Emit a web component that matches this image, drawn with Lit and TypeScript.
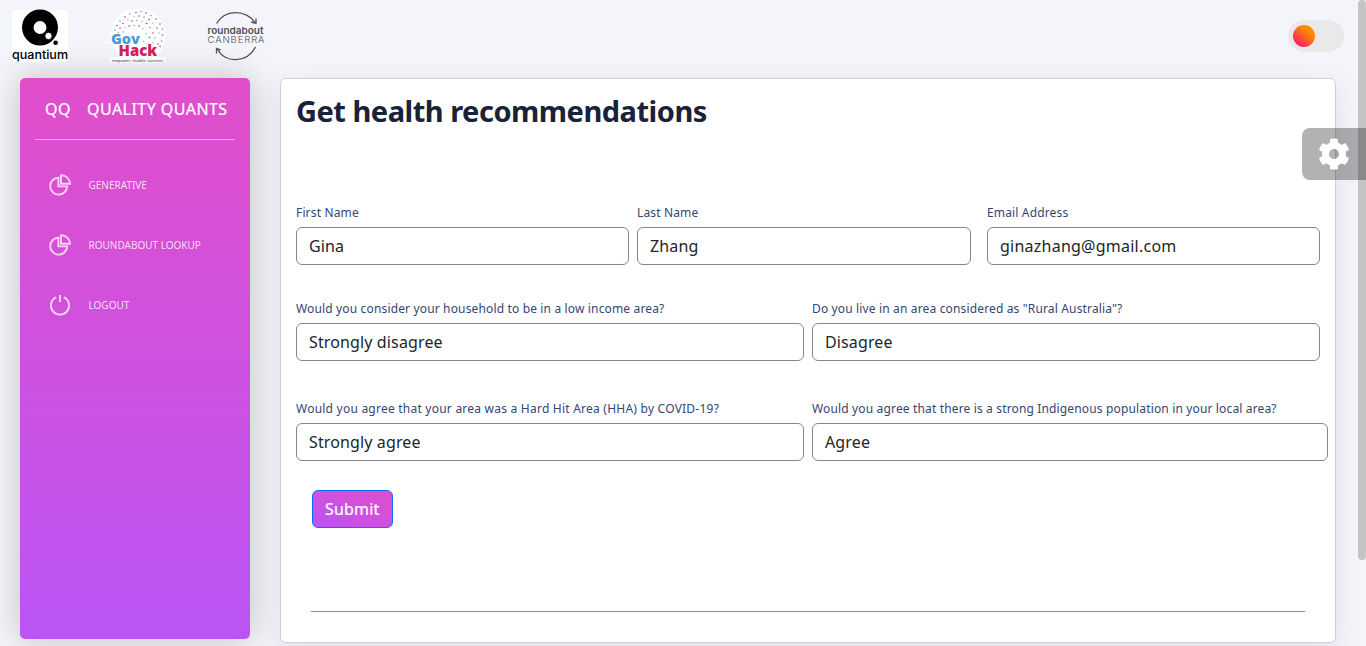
import { LitElement, html, css, svg } from "lit";
import { customElement } from "lit/decorators.js";

const pie = svg`<path d="M9.400 3.600A8.500 8.500 0 1 0 18.200 12.400H9.400Z"/><path d="M12 1.300V9.700H21A8.700 8.700 0 0 0 12 1.300Z"/>`;
const power = svg`<path d="M7.200 3.200A9.100 9.100 0 1 0 14.800 3.200"/><path d="M11 1V8"/>`;

const dots: number[][] = [
  [26, 4.5, 0], [31, 3.5, 1], [36, 5, 0], [20, 6, 1], [15, 9, 0], [41, 7.5, 1], [46, 11, 0], [50, 16, 0], [52.5, 21, 1],
  [24, 8.5, 2], [29, 8, 0], [34, 9, 1], [39, 11.5, 0], [43, 15, 2], [47, 20, 0], [49, 25, 2], [52.5, 27, 0], [51.5, 33, 1],
  [10, 13, 1], [13, 15.500, 0], [18, 12, 2], [22, 13, 0], [27, 12.500, 1], [32, 13.500, 2], [36.500, 15.500, 0], [40, 19.500, 1],
  [7, 17.500, 0], [5, 22, 1], [10, 20, 0], [15, 19.500, 2], [19, 18, 0], [24, 17.500, 1], [29, 18, 0], [33, 20.500, 2],
  [8.500, 24.500, 2], [13, 24, 1], [43, 25, 0], [36, 25.500, 2], [39.500, 29.500, 0], [45, 30, 1], [48, 36, 0], [33.500, 33.500, 2],
  [43, 35, 2], [50, 38.500, 0], [37, 35.500, 2],
];
const dotColors = ["#d4305f", "#5ba5d8", "#b9b3bc"];

@customElement("app-root")
export class AppRoot extends LitElement {
  static styles = css`
    :host { display: block; font-family: "Noto Sans", "Open Sans", sans-serif; }
    * { box-sizing: border-box; }
    .page { position: relative; width: 1366px; height: 646px; overflow: hidden; background: #f4f5fa; display: flex; flex-direction: column; }
    .top { height: 78px; flex: none; display: flex; padding: 8px 22px 0 12px; }
    .logo { display: block; width: 56px; height: 56px; margin-right: 42px; overflow: visible; }
    .switch { margin: 12px 0 0 auto; width: 56px; height: 32px; border-radius: 16px; background: #e9e9e9; padding: 5px; }
    .knob { width: 22px; height: 22px; border-radius: 50%; background: linear-gradient(40deg, #ff0080, #ff8c00 70%); }
    .body { display: flex; padding-left: 20px; }
    .side { width: 230px; height: 561px; flex: none; border-radius: 5px; background: linear-gradient(0deg, #ba54f5, #e14eca); box-shadow: 0 0 34px 0 rgba(0,0,0,.22); padding: 0 15px; color: #fff; }
    .brand { height: 62px; border-bottom: 1px solid rgba(255,255,255,.5); display: flex; padding: 19px 0 0 10px; font-size: 16px; line-height: 24px; white-space: nowrap; letter-spacing: .45px; -webkit-text-stroke: .2px #fff; }
    .qq { width: 42px; }
    .nav { display: flex; flex-direction: column; padding-top: 15px; }
    .item { height: 60px; display: flex; align-items: center; padding-left: 14px; font-size: 10px; color: rgba(255,255,255,.8); white-space: nowrap; }
    .item svg { width: 22px; height: 22px; margin-right: 17.500px; fill: none; stroke: rgba(255,255,255,.75); stroke-width: 1.900; }
    .card { margin-left: 30px; width: 1056px; height: 565px; border: 1px solid #cfd1d4; border-radius: 6px; background: #fff; box-shadow: 0 8px 28px rgba(50,50,93,.1); padding: 0 0 0 15px; display: flex; flex-direction: column; }
    .title { margin: 10px 0 0; height: 44px; font-size: 29px; line-height: 44px; font-weight: 700; letter-spacing: -.49px; color: #1a2238; white-space: nowrap; }
    .row { display: flex; white-space: nowrap; }
    .r1 { margin-top: 69px; }
    .r2 { margin-top: 33px; }
    .r3 { margin-top: 37px; }
    .field { display: flex; flex-direction: column; }
    .label { height: 25px; line-height: 22px; font-size: 12px; letter-spacing: .15px; color: #344675; }
    .hha .label { letter-spacing: .23px; }
    .input { height: 38px; border: 1px solid #85858f; border-radius: 6px; padding: 0 12px; font-size: 16px; line-height: 36px; letter-spacing: .13px; color: #212529; }
    .mail .input { letter-spacing: .24px; }
    .w333 { width: 333px; }
    .w334 { width: 334px; }
    .w508 { width: 508px; }
    .w516 { width: 516px; }
    .gap8 { margin-left: 8px; }
    .gap16 { margin-left: 16px; }
    .submit { margin: 29px 0 0 16px; width: 81px; height: 38px; border: 1px solid #0d6efd; border-radius: 6px; background: linear-gradient(to bottom left, #e14eca, #ba54f5); color: #fff; font: 16px/36px "Noto Sans", sans-serif; letter-spacing: .2px; -webkit-text-stroke: .2px #fff; padding: 0 12px; text-align: left; }
    .line { margin: 83px 30px 0 15px; height: 1px; background: #8c8d98; }
    .gear { position: absolute; right: 0; top: 128px; width: 64px; height: 52px; border-radius: 8px 0 0 8px; background: rgba(0,0,0,.3); display: flex; align-items: center; padding-left: 16px; }
    .gear svg { width: 32px; height: 32px; fill: #fff; }
    .scroll { position: absolute; right: 0; top: 0; width: 8px; height: 560px; background: #c4c4c7; border-radius: 4px; }
  `;
  field(label: string, value: string, cls: string) {
    return html`<div class="field ${cls}"><div class="label">${label}</div><div class="input">${value}</div></div>`;
  }
  render() {
    return html`<div class="page">
      <header class="top">
        <svg class="logo" viewBox="0 0 56 56"><rect y="2" width="56" height="52" rx="3" fill="#fff"/><circle cx="28" cy="19.500" r="12.200" fill="none" stroke="#000" stroke-width="11.500"/><circle cx="36.500" cy="28" r="3.700" fill="#fff" stroke="#000" stroke-width="1"/><circle cx="43.600" cy="34.800" r="2.300"/><text x="0" y="50.500" font-family="Inter" font-size="12.500" font-weight="500" textLength="56" lengthAdjust="spacingAndGlyphs">quantium</text></svg>
        <svg class="logo" viewBox="0 0 56 56"><circle cx="28" cy="28" r="27.500" fill="#fff"/><rect y="49" width="56" height="6" fill="#fff"/>${dots.map(([x, y, c]) => svg`<circle cx=${x} cy=${y} r=".8" fill=${dotColors[c]}/>`)}<text x="1" y="36" font-family="Open Sans" font-size="14.500" font-weight="800" fill="#4a9bd9" textLength="29" lengthAdjust="spacingAndGlyphs">Gov</text><text x="8.500" y="48.300" font-family="Open Sans" font-size="15" font-weight="800" fill="#d3215a" textLength="38.500" lengthAdjust="spacingAndGlyphs">Hack</text><text x="2" y="53.600" font-family="Open Sans" font-size="4.200" font-weight="600" fill="#666" textLength="52" lengthAdjust="spacingAndGlyphs">empower. enable. connect.</text></svg>
        <svg class="logo" viewBox="0 0 56 56"><g fill="none" stroke="#505156" stroke-width="1.300"><path d="M8.500 15.500C17 1.500 37 1 47 14.500M48 10.500V15.300L43 14"/><path d="M47.500 39C39 55 17 56 9.500 41M8.500 45.500V40.500L13 42"/></g><text x="-.5" y="25.500" font-family="Inter" font-size="9.500" font-weight="600" fill="#505156" textLength="56" lengthAdjust="spacingAndGlyphs">roundabout</text><text x="-.5" y="35.300" font-family="Inter" font-size="9.500" font-weight="300" fill="#505156" textLength="57">CANBERRA</text></svg>
        <div class="switch"><div class="knob"></div></div>
      </header>
      <div class="body">
        <aside class="side">
          <div class="brand"><span class="qq">QQ</span><span>QUALITY QUANTS</span></div>
          <nav class="nav">
            <div class="item"><svg viewBox="0 0 22 22">${pie}</svg><span>GENERATIVE</span></div>
            <div class="item"><svg viewBox="0 0 22 22">${pie}</svg><span>ROUNDABOUT LOOKUP</span></div>
            <div class="item"><svg viewBox="0 0 22 22">${power}</svg><span>LOGOUT</span></div>
          </nav>
        </aside>
        <main class="card">
          <h1 class="title">Get health recommendations</h1>
          <div class="row r1">
            ${this.field("First Name", "Gina", "w333")}
            ${this.field("Last Name", "Zhang", "w334 gap8")}
            ${this.field("Email Address", "ginazhang@gmail.com", "w333 gap16 mail")}
          </div>
          <div class="row r2">
            ${this.field("Would you consider your household to be in a low income area?", "Strongly disagree", "w508")}
            ${this.field('Do you live in an area considered as "Rural Australia"?', "Disagree", "w508 gap8")}
          </div>
          <div class="row r3">
            ${this.field("Would you agree that your area was a Hard Hit Area (HHA) by COVID-19?", "Strongly agree", "w508 hha")}
            ${this.field("Would you agree that there is a strong Indigenous population in your local area?", "Agree", "w516 gap8")}
          </div>
          <button class="submit">Submit</button>
          <div class="line"></div>
        </main>
      </div>
      <div class="scroll"></div>
      <div class="gear"><svg viewBox="0 0 512 512"><path d="M487.400 315.700l-42.600-24.600c4.300-23.200 4.300-47 0-70.200l42.600-24.600c4.900-2.800 7.100-8.600 5.500-14-11.100-35.600-30-67.800-54.700-94.600-3.800-4.100-10-5.100-14.800-2.300L380.800 110c-17.900-15.400-38.500-27.300-60.800-35.100V25.800c0-5.600-3.900-10.500-9.400-11.700-36.700-8.200-74.300-7.800-109.200 0-5.500 1.200-9.400 6.100-9.400 11.700V75c-22.200 7.900-42.800 19.800-60.800 35.100L88.700 85.500c-4.900-2.800-11-1.900-14.800 2.300-24.700 26.700-43.600 58.900-54.700 94.600-1.700 5.400.6 11.200 5.500 14L67.300 221c-4.300 23.200-4.300 47 0 70.200l-42.600 24.600c-4.900 2.800-7.100 8.600-5.500 14 11.100 35.600 30 67.800 54.700 94.600 3.800 4.100 10 5.100 14.800 2.300l42.600-24.600c17.900 15.400 38.500 27.300 60.800 35.100v49.200c0 5.600 3.900 10.500 9.400 11.700 36.700 8.200 74.300 7.800 109.200 0 5.500-1.200 9.400-6.100 9.400-11.700v-49.200c22.200-7.900 42.800-19.800 60.800-35.100l42.600 24.600c4.900 2.800 11 1.900 14.800-2.300 24.700-26.700 43.600-58.900 54.700-94.600 1.500-5.500-.7-11.300-5.600-14.100zM256 336c-44.100 0-80-35.900-80-80s35.900-80 80-80 80 35.900 80 80-35.900 80-80 80z"/></svg></div>
    </div>`;
  }
}
